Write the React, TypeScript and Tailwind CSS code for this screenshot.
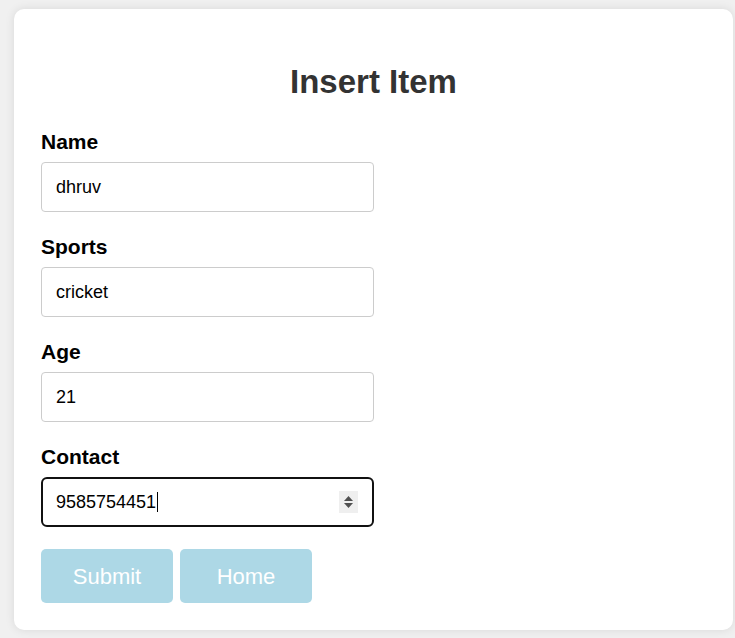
import React from "react";

const font = { fontFamily: '"Liberation Sans", Arial, sans-serif' };

function Field({ label, value }: { label: string; value: string }) {
  return (
    <div className="mb-[23px]">
      <label className="block text-[21px] leading-[24px] font-bold text-black mb-2">{label}</label>
      <input
        readOnly
        value={value}
        className="block w-[333px] h-[50px] border border-[#cccccc] rounded-[4px] pl-[14px] text-[18px] text-black bg-white outline-none"
        style={font}
      />
    </div>
  );
}

export default function App() {
  return (
    <div className="min-h-[638px] bg-[#f0f0f0] pt-[9px] pl-[14px] pr-[2px] pb-[8px]" style={font}>
      <div className="w-[719px] bg-white rounded-[10px] shadow-[0_0_10px_rgba(0,0,0,0.1)] px-[27px] pt-[27px] pb-[27px]">
        <h1 className="text-center text-[33px] leading-[38px] font-bold text-[#333333] mt-[27px] mb-[29px]">
          Insert Item
        </h1>
        <Field label="Name" value="dhruv" />
        <Field label="Sports" value="cricket" />
        <Field label="Age" value="21" />
        <div className="mb-[22px]">
          <label className="block text-[21px] leading-[24px] font-bold text-black mb-2">Contact</label>
          <div className="relative flex items-center w-[333px] h-[50px] border-2 border-[#111111] rounded-[6px] pl-[13px] text-[18px] text-black bg-white">
            <span>9585754451</span>
            <span className="inline-block w-px h-[20px] bg-black ml-px" />
            <div className="absolute right-[14px] top-[12px] w-[19px] h-[22px] bg-[#efefef] flex flex-col items-center justify-center gap-[2px]">
              <svg width="9" height="5" viewBox="0 0 9 5"><path d="M0 5 L4.5 0 L9 5 Z" fill="#505050" /></svg>
              <svg width="9" height="5" viewBox="0 0 9 5"><path d="M0 0 L4.5 5 L9 0 Z" fill="#505050" /></svg>
            </div>
          </div>
        </div>
        <div className="flex gap-[7px]">
          <button className="w-[132px] h-[54px] bg-[#add8e6] text-white text-[22px] rounded-[5px]">Submit</button>
          <button className="w-[132px] h-[54px] bg-[#add8e6] text-white text-[22px] rounded-[5px]">Home</button>
        </div>
      </div>
    </div>
  );
}
